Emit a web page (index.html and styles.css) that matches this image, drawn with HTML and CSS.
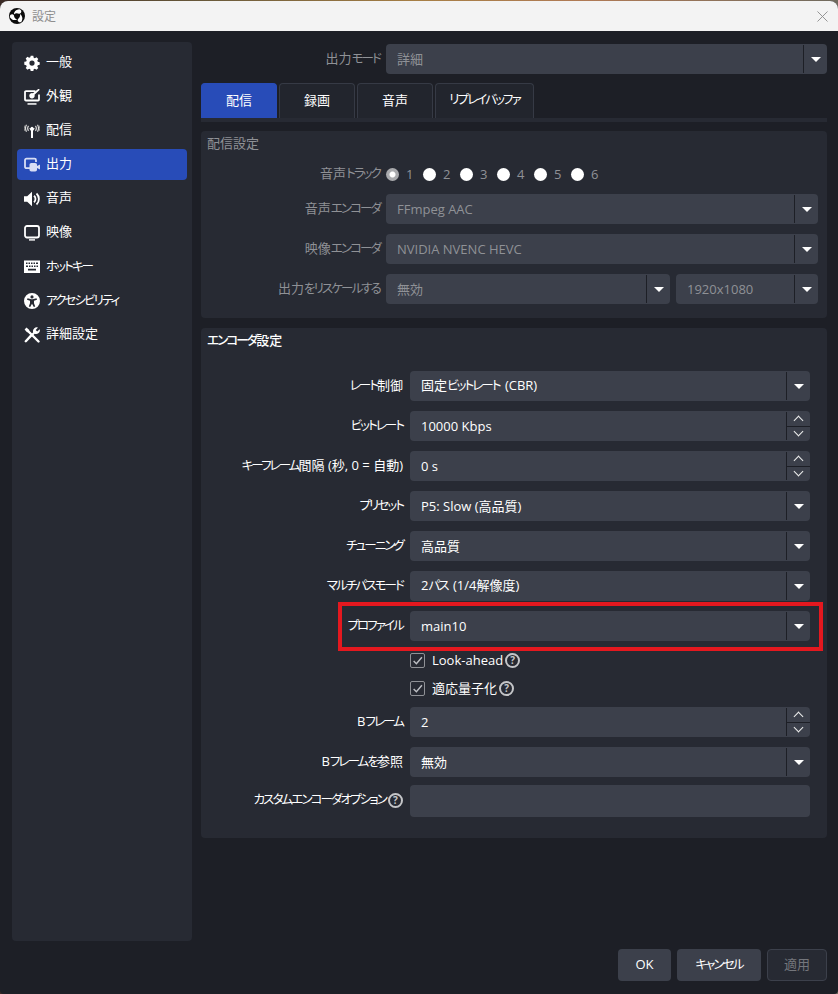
FILE: index.html
```html
<!DOCTYPE html>
<html lang="ja">
<head>
<meta charset="utf-8">
<title>設定</title>
<link rel="stylesheet" href="styles.css">
</head>
<body>
<div class="window">
  <header class="titlebar">
    <svg class="logo" viewBox="0 0 16 16"><circle cx="8" cy="8" r="8" fill="#0c0c0c"/><g fill="#fff"><path id="arm" d="M9.200 1.500A2.200 2.200 0 1 1 10 5.700C8.300 4.800 6.300 5 4.800 6.400 5 3.900 6.900 1.700 9.200 1.500Z"/><path transform="rotate(120 8 8)" d="M9.200 1.500A2.200 2.200 0 1 1 10 5.700C8.300 4.800 6.300 5 4.800 6.400 5 3.900 6.900 1.700 9.200 1.500Z"/><path transform="rotate(240 8 8)" d="M9.200 1.500A2.200 2.200 0 1 1 10 5.700C8.300 4.800 6.300 5 4.800 6.400 5 3.900 6.900 1.700 9.200 1.500Z"/></g></svg>
    <span class="title">設定</span>
    <svg class="close" viewBox="0 0 12 12"><path d="M.5.5l11 11M11.500.5l-11 11" stroke="#8c8c8c" stroke-width="1" fill="none"/></svg>
  </header>
  <div class="content">
    <nav class="sidebar">
      <div class="nav-item"><svg class="nav-icon" viewBox="0 0 16 16"><path fill-rule="evenodd" fill="#fff" d="M6.700 .8h2.600l.4 1.900 1.200.5 1.600-1 1.800 1.800-1 1.600.5 1.200 1.900.4v2.600l-1.900.4-.5 1.200 1 1.600-1.800 1.800-1.600-1-1.200.5-.4 1.900H6.700l-.4-1.900-1.200-.5-1.600 1-1.800-1.800 1-1.600-.5-1.200-1.900-.4V6.800l1.900-.4.500-1.200-1-1.600 1.800-1.800 1.600 1 1.200-.5zM8 5.500a2.600 2.600 0 1 0 0 5.200 2.600 2.600 0 0 0 0-5.200z"/></svg><span class="nav-text">一般</span></div>
      <div class="nav-item"><svg class="nav-icon" viewBox="0 0 16 16"><path d="M11.500 2.200H2a1 1 0 0 0-1 1v7.300a1 1 0 0 0 1 1h12a1 1 0 0 0 1-1V5.500" fill="none" stroke="#fff" stroke-width="1.800"/><path d="M15.800.8l-5.300 5a2.700 2.700 0 1 1-1.600-1.600L14.600-.3z" fill="#fff"/><rect x="3.500" y="14.200" width="9" height="1.500" fill="#fff"/></svg><span class="nav-text">外観</span></div>
      <div class="nav-item"><svg class="nav-icon" viewBox="0 0 16 16"><path d="M5.200 5.300h5.600l-1.800 2.600V15H7V7.900z" fill="#fff"/><circle cx="8" cy="5.200" r="1.500" fill="#fff"/><path d="M4.500 2.800a4.500 4.500 0 0 0 0 5M11.500 2.800a4.500 4.500 0 0 1 0 5M2.500 1.800a7 7 0 0 0 0 7M13.500 1.800a7 7 0 0 1 0 7" fill="none" stroke="#ddd" stroke-width="1.200"/><path d="M.9 2.500a7 7 0 0 0 0 5.500M15.100 2.500a7 7 0 0 1 0 5.500" fill="none" stroke="#999" stroke-width="1"/></svg><span class="nav-text">配信</span></div>
      <div class="nav-item active"><svg class="nav-icon" viewBox="0 0 16 16"><path d="M6 11.200H2.500A1.500 1.500 0 0 1 1 9.700V3.200a1.500 1.500 0 0 1 1.500-1.500h8A1.500 1.500 0 0 1 12 3.200V5" fill="none" stroke="#d8def5" stroke-width="1.800"/><rect x="5.500" y="6" width="7.500" height="8.500" rx="1.800" fill="#d8def5"/><path d="M13 9l3-1.500v5L13 11z" fill="#d8def5"/></svg><span class="nav-text">出力</span></div>
      <div class="nav-item"><svg class="nav-icon" viewBox="0 0 16 16"><path d="M0 5.200h3.200L8 .8v14.400l-4.800-4.400H0z" fill="#fff"/><path d="M10 4.800a4.200 4.200 0 0 1 0 6.400M12.500 2.500a7.500 7.500 0 0 1 0 11" fill="none" stroke="#fff" stroke-width="1.800"/></svg><span class="nav-text">音声</span></div>
      <div class="nav-item"><svg class="nav-icon" viewBox="0 0 16 16"><rect x="1" y="1" width="14" height="11.500" rx="2" fill="none" stroke="#fff" stroke-width="1.800"/><rect x="5" y="14.200" width="6" height="1.400" fill="#fff"/></svg><span class="nav-text">映像</span></div>
      <div class="nav-item"><svg class="nav-icon" viewBox="0 0 16 16"><path fill-rule="evenodd" fill="#fff" d="M0 1.500h16v12.500H0zM2 3.500v1.500h1.500V3.500zM4.500 3.500v1.500H6V3.500zM7 3.500v1.500h1.500V3.500zM9.500 3.500v1.500H11V3.500zM12 3.500v1.500h2V3.500zM2 6.500v1.500h2V6.500zM5 6.500v1.500h1.500V6.500zM7.500 6.500v1.500H9V6.500zM10 6.500v1.500h1.500V6.500zM12.500 6.500v1.500H14V6.500zM4 9.800v1.700h8V9.800z"/></svg><span class="nav-text kana">ホットキー</span></div>
      <div class="nav-item"><svg class="nav-icon" viewBox="0 0 16 16"><path fill-rule="evenodd" fill="#fff" d="M8 0a8 8 0 1 1 0 16A8 8 0 0 1 8 0zM8 2.300a1.600 1.600 0 1 0 0 3.200 1.600 1.600 0 0 0 0-3.200zM3.500 5.300l-.5 1.400L6 7.700v2.500l-1.200 3.400 1.400.5L8 10.800l1.800 3.300 1.400-.5L10 10.200V7.700l3-1-.5-1.400-4 1h-1z"/></svg><span class="nav-text kana">アクセシビリティ</span></div>
      <div class="nav-item"><svg class="nav-icon" viewBox="0 0 16 16"><path d="M1.800 14.200l5-5.300M14.500 14.500L3 3" stroke="#fff" stroke-width="2.400" fill="none" stroke-linecap="round"/><path d="M.6 2.500L2.500.6l3 2.700L3.300 5.500zM15.700 2.200l-2.500 2.300-1.500-1.500L14 .5a3.800 3.800 0 0 0-4.800 4.800L7.200 7.200l1.600 1.600 1.900-2a3.800 3.800 0 0 0 5-4.600z" fill="#fff"/></svg><span class="nav-text">詳細設定</span></div>
    </nav>
    <main class="main">
      <div class="mode-row">
        <label class="label muted">出力<span class="kana">モード</span></label>
        <div class="combo disabled"><span class="value">詳細</span><span class="arrow"></span></div>
      </div>
      <div class="tabs">
        <div class="tab active">配信</div>
        <div class="tab">録画</div>
        <div class="tab">音声</div>
        <div class="tab wide"><span class="kana">リプレイバッファ</span></div>
      </div>
      <div class="tab-line"></div>
      <section class="group stream-group">
        <h2 class="group-title muted">配信設定</h2>
        <div class="form">
          <label class="label muted radio-label">音声<span class="kana">トラック</span></label>
          <div class="radios">
            <span class="radio checked"></span><span class="radio-text">1</span>
            <span class="radio"></span><span class="radio-text">2</span>
            <span class="radio"></span><span class="radio-text">3</span>
            <span class="radio"></span><span class="radio-text">4</span>
            <span class="radio"></span><span class="radio-text">5</span>
            <span class="radio"></span><span class="radio-text">6</span>
          </div>
          <label class="label muted">音声<span class="kana">エンコーダ</span></label>
          <div class="combo disabled"><span class="value">FFmpeg AAC</span><span class="arrow"></span></div>
          <label class="label muted">映像<span class="kana">エンコーダ</span></label>
          <div class="combo disabled"><span class="value">NVIDIA NVENC HEVC</span><span class="arrow"></span></div>
          <label class="label muted">出力<span class="kana">をリスケールする</span></label>
          <div class="pair">
            <div class="combo disabled grow"><span class="value">無効</span><span class="arrow"></span></div>
            <div class="combo disabled small"><span class="value">1920x1080</span><span class="arrow"></span></div>
          </div>
        </div>
      </section>
      <section class="group encoder-group">
        <h2 class="group-title"><span class="kana">エンコーダ</span>設定</h2>
        <div class="form">
          <label class="label"><span class="kana">レート</span>制御</label>
          <div class="combo"><span class="value">固定<span class="kana tail">ビットレート</span> (CBR)</span><span class="arrow"></span></div>
          <label class="label"><span class="kana">ビットレート</span></label>
          <div class="combo"><span class="value">10000 Kbps</span><span class="spin"><i class="up"></i><i class="down"></i></span></div>
          <label class="label"><span class="kana">キーフレーム</span>間隔 (秒, 0 = 自動)</label>
          <div class="combo"><span class="value">0 s</span><span class="spin"><i class="up"></i><i class="down"></i></span></div>
          <label class="label"><span class="kana">プリセット</span></label>
          <div class="combo"><span class="value">P5: Slow (高品質)</span><span class="arrow"></span></div>
          <label class="label"><span class="kana">チューニング</span></label>
          <div class="combo"><span class="value">高品質</span><span class="arrow"></span></div>
          <label class="label"><span class="kana">マルチパスモード</span></label>
          <div class="combo"><span class="value">2<span class="kana tail">パス</span> (1/4解像度)</span><span class="arrow"></span></div>
          <label class="label"><span class="kana">プロファイル</span></label>
          <div class="combo marked"><span class="value">main10</span><span class="arrow"></span></div>
          <div class="check-row"><span class="checkbox"><svg viewBox="0 0 10 10"><path d="M1.500 5.500l2.500 2.500 5-6" fill="none" stroke="#bdbfc4" stroke-width="1.300"/></svg></span><span>Look-ahead</span><span class="help">?</span></div>
          <div class="check-row"><span class="checkbox"><svg viewBox="0 0 10 10"><path d="M1.500 5.500l2.500 2.500 5-6" fill="none" stroke="#bdbfc4" stroke-width="1.300"/></svg></span><span>適応量子化</span><span class="help">?</span></div>
          <label class="label">B<span class="kana">フレーム</span></label>
          <div class="combo"><span class="value">2</span><span class="spin"><i class="up"></i><i class="down"></i></span></div>
          <label class="label">B<span class="kana">フレームを</span>参照</label>
          <div class="combo"><span class="value">無効</span><span class="arrow"></span></div>
          <label class="label custom-label"><span class="kana">カスタムエンコーダオプション</span><span class="help">?</span></label>
          <div class="combo custom-input"></div>
        </div>
      </section>
    </main>
  </div>
  <footer class="footer">
    <button class="btn ok">OK</button>
    <button class="btn cancel"><span class="kana">キャンセル</span></button>
    <button class="btn apply">適用</button>
  </footer>
</div>
</body>
</html>
```

FILE: styles.css
```css
* { box-sizing: border-box; }
html, body { margin: 0; padding: 0; width: 838px; height: 994px; overflow: hidden; }
body {
  background: linear-gradient(90deg, #3a2a25 0, #6a5a3a 25%, #a77f45 50%, #b07a55 70%, #6f6a5e 100%);
  font-family: "Open Sans", "Noto Sans CJK JP", sans-serif;
  font-size: 13px;
  color: #fff;
  font-feature-settings: "palt";
}
.kana { font-size: 12.500px; letter-spacing: -1.900px; }
.tail { margin-right: 2px; }
.window {
  margin-top: 1px;
  height: 993px;
  background: #1d1f26;
  border-radius: 8px 8px 4px 4px;
  overflow: hidden;
  display: flex;
  flex-direction: column;
}
.titlebar {
  height: 30px;
  flex: none;
  background: #f3f3f3;
  display: flex;
  align-items: center;
  padding: 0 9px;
  color: #8e8e8e;
}
.logo { width: 16px; height: 16px; margin-right: 7px; }
.title { font-size: 12px; flex: 1; }
.close { width: 11px; height: 11px; margin-right: 1px; }
.content {
  height: 910px;
  flex: none;
  display: flex;
  gap: 9px;
  padding: 11px 11px 0 12px;
}
.sidebar {
  width: 180px;
  flex: none;
  background: #272a33;
  border-radius: 4px;
  padding: 5px;
  display: flex;
  flex-direction: column;
  gap: 3px;
}
.nav-item {
  height: 31px;
  flex: none;
  display: flex;
  align-items: center;
  gap: 6px;
  padding: 0 7px;
  border-radius: 4px;
  color: #fff;
}
.nav-text { line-height: 16px; padding-bottom: 3px; }
.nav-text.kana { padding-bottom: 0; }
.nav-item.active { background: #284cb8; }
.nav-icon { width: 16px; height: 16px; flex: none; }
.main {
  flex: 1;
  display: flex;
  flex-direction: column;
  padding-top: 2px;
  min-width: 0;
}
.mode-row {
  display: grid;
  flex: none;
  grid-template-columns: 180px 441px;
  column-gap: 5px;
  align-items: center;
}
.label {
  text-align: right;
  white-space: nowrap;
  line-height: 16px;
  padding-right: 1px;
  padding-bottom: 2px;
}
.muted { color: #8f9196; }
.combo {
  height: 30px;
  background: #3c404b;
  border-radius: 4px;
  display: flex;
  align-items: center;
  position: relative;
}
.value { flex: 1; padding-left: 11px; padding-bottom: 1px; white-space: nowrap; line-height: 16px; }
.disabled .value { color: #8f9196; }
.arrow {
  width: 24px;
  height: 28px;
  flex: none;
  border-left: 1px solid #1d1f26;
  position: relative;
}
.arrow::after {
  content: "";
  position: absolute;
  left: 7px;
  top: 12px;
  border-left: 5px solid transparent;
  border-right: 5px solid transparent;
  border-top: 5px solid #fff;
}
.spin {
  width: 24px;
  height: 28px;
  flex: none;
  border-left: 1px solid #1d1f26;
  display: flex;
  flex-direction: column;
}
.spin i {
  flex: 1;
  position: relative;
  display: block;
}
.spin .up { border-bottom: 1px solid #1d1f26; }
.spin i::after {
  content: "";
  position: absolute;
  left: 8px;
  width: 6px;
  height: 6px;
  border-left: 1px solid #eee;
  border-top: 1px solid #eee;
}
.spin .up::after { top: 5px; transform: rotate(45deg); }
.spin .down::after { top: 1px; transform: rotate(225deg); }
.tabs {
  display: flex;
  flex: none;
  gap: 2px;
  margin-top: 9px;
}
.tab {
  width: 76px;
  height: 35px;
  display: flex;
  align-items: center;
  justify-content: center;
  background: #22252d;
  border: 1px solid #363a45;
  border-bottom: none;
  border-radius: 4px 4px 0 0;
  padding-bottom: 3px;
  line-height: 16px;
}
.tab.wide { width: 99px; }
.tab.active { background: #284cb8; border-color: #284cb8; }
.tab-line { height: 4px; background: #272a33; flex: none; }
.group {
  background: #272a33;
  border-radius: 4px;
  flex: none;
}
.stream-group { margin-top: 9px; height: 187px; }
.encoder-group { margin-top: 10px; height: 510px; }
.group-title {
  margin: 0;
  height: 26px;
  line-height: 25px;
  padding-left: 6px;
  font-size: 13px;
  font-weight: 400;
}
.encoder-group .group-title { font-weight: 500; }
.form {
  display: grid;
  align-items: center;
  row-gap: 10px;
}
.stream-group .form {
  grid-template-columns: 180px 432px;
  column-gap: 5px;
  padding-top: 8px;
}
.encoder-group .form {
  grid-template-columns: 203px 400px;
  column-gap: 6px;
  padding-top: 17px;
}
.radios {
  height: 18px;
  line-height: 16px;
  padding-bottom: 1px;
  display: flex;
  align-items: center;
  color: #8f9196;
}
.radio {
  width: 13px;
  height: 13px;
  border-radius: 50%;
  background: #fff;
  flex: none;
}
.radio.checked {
  background: radial-gradient(circle, #fff 0 2.500px, #a9aaad 3.500px);
}
.radio-text { width: 24px; padding-left: 7px; }
.pair { display: flex; gap: 6px; }
.grow { flex: 1; }
.small { width: 142px; flex: none; }
.marked::before {
  content: "";
  position: absolute;
  left: -72px;
  right: -13px;
  top: -9px;
  bottom: -10px;
  border: 4px solid #e4181f;
  pointer-events: none;
}
.check-row {
  grid-column: 2;
  height: 18px;
  line-height: 16px;
  display: flex;
  align-items: center;
}
.checkbox {
  width: 15px;
  height: 15px;
  border: 1px solid #8f9196;
  border-radius: 2px;
  margin-right: 7px;
  display: flex;
  align-items: center;
  justify-content: center;
}
.checkbox svg { width: 11px; height: 11px; }
.help {
  display: inline-flex;
  width: 15px;
  height: 15px;
  border: 2px solid #c4c5c8;
  border-radius: 50%;
  align-items: center;
  justify-content: center;
  font-size: 10px;
  font-weight: 700;
  color: #c4c5c8;
  margin-left: 2px;
  flex: none;
}
.custom-label { display: flex; justify-content: flex-end; align-items: center; margin-top: -2px; }
.custom-input { height: 32px; margin-top: -2px; }
.footer {
  height: 53px;
  flex: none;
  display: flex;
  justify-content: flex-end;
  align-items: flex-start;
  gap: 6px;
  padding: 8px 11px 0 0;
}
.btn {
  height: 32px;
  border: none;
  border-radius: 4px;
  background: #3c404b;
  color: #fff;
  font: inherit;
  line-height: 16px;
  padding: 0 0 2px;
}
.ok { width: 53px; }
.cancel { width: 84px; }
.apply { width: 60px; background: #272a33; border: 1px solid #3c404b; color: #74767c; }
```
